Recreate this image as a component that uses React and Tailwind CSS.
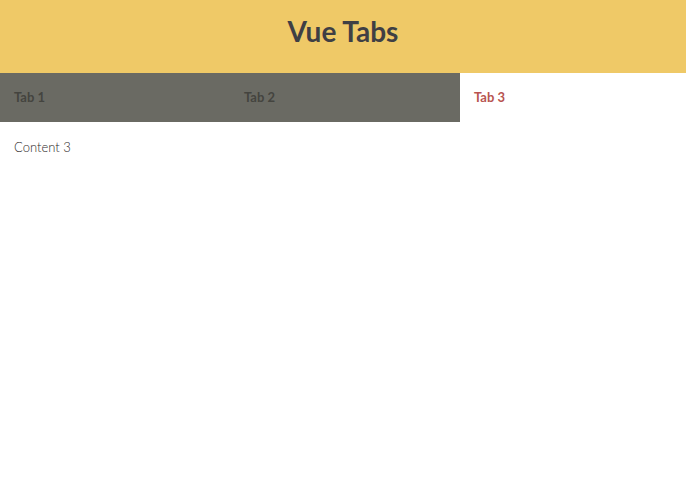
import { useState } from 'react';

const tabs = [
  { id: 1, title: 'Tab 1', content: 'Content 1' },
  { id: 2, title: 'Tab 2', content: 'Content 2' },
  { id: 3, title: 'Tab 3', content: 'Content 3' },
];

export default function App() {
  const [active, setActive] = useState(3);
  const current = tabs.find((t) => t.id === active);

  return (
    <div className="w-full min-h-screen bg-white font-['Lato','Open_Sans',sans-serif]">
      {/* Header */}
      <header className="h-[73px] bg-[#efc967] flex items-center justify-center pb-[12px]">
        <h1 className="text-[28px] font-bold text-[#3f3f44]">Vue Tabs</h1>
      </header>

      {/* Tab bar */}
      <div className="grid grid-cols-[230px_230px_1fr] h-[49px]">
        {tabs.map((tab) => (
          <button
            key={tab.id}
            onClick={() => setActive(tab.id)}
            className={`flex items-center px-[14px] text-[13px] font-bold text-left ${
              active === tab.id ? 'bg-white text-[#b85450]' : 'bg-[#6a6a63] text-[#44443f]'
            }`}
          >
            {tab.title}
          </button>
        ))}
      </div>

      {/* Content */}
      <div className="px-[14px] pt-[16px] text-[13px] font-light text-[#2f2a2a]">
        {current.content}
      </div>
    </div>
  );
}
